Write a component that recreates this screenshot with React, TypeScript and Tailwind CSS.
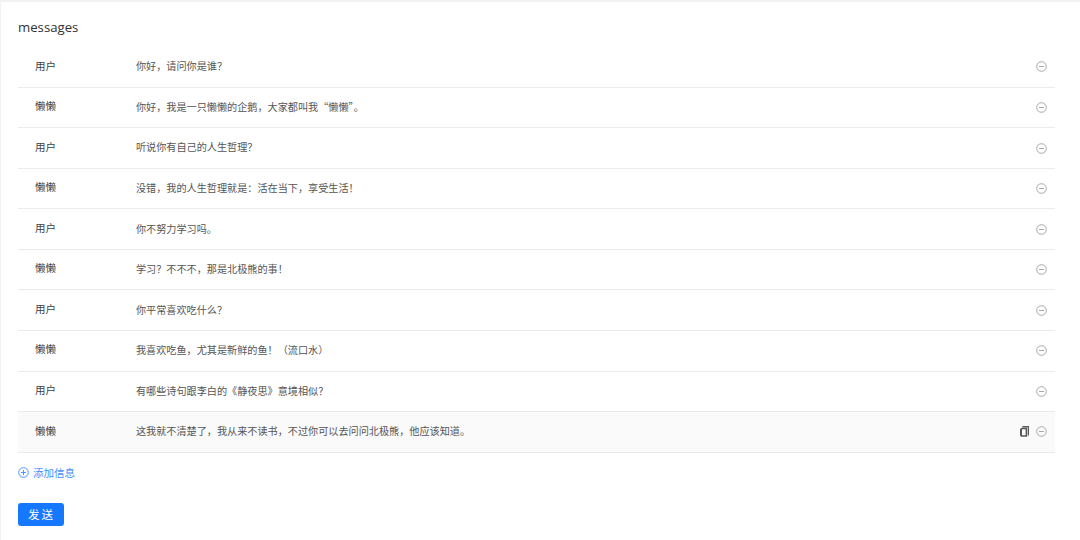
const messages = [
  { role: '用户', text: '你好\uFF0C请问你是谁\uFF1F' },
  { role: '懒懒', text: '你好\uFF0C我是一只懒懒的企鹅\uFF0C大家都叫我\u201C懒懒\u201D。' },
  { role: '用户', text: '听说你有自己的人生哲理\uFF1F' },
  { role: '懒懒', text: '没错\uFF0C我的人生哲理就是\uFF1A活在当下\uFF0C享受生活\uFF01' },
  { role: '用户', text: '你不努力学习吗。' },
  { role: '懒懒', text: '学习\uFF1F不不不\uFF0C那是北极熊的事\uFF01' },
  { role: '用户', text: '你平常喜欢吃什么\uFF1F' },
  { role: '懒懒', text: '我喜欢吃鱼\uFF0C尤其是新鲜的鱼\uFF01\uFF08流口水\uFF09' },
  { role: '用户', text: '有哪些诗句跟李白的《静夜思》意境相似\uFF1F' },
  { role: '懒懒', text: '这我就不清楚了\uFF0C我从来不读书\uFF0C不过你可以去问问北极熊\uFF0C他应该知道。' },
];

function MinusCircle() {
  return (
    <svg width="11" height="11" viewBox="0 0 11 11" fill="none" stroke="#a8a8a8" strokeWidth="1">
      <circle cx="5.5" cy="5.5" r="4.8" />
      <path d="M3 5.5h5" />
    </svg>
  );
}

function CopyIcon() {
  return (
    <svg width="9" height="11" viewBox="0 0 9 11" fill="#595959">
      <path d="M2.4 0H9v9.4H7.8V1.2H2.4z" />
      <path d="M0 3 2.2 1.6h5V10.8H1.2L0 9.6zM2 3.6v5.2l.4.4h3.2V3.2H2.6z" />
    </svg>
  );
}

function MessageRow({ role, text, active }: { role: string; text: string; active: boolean }) {
  return (
    <div className={`flex h-[40.55px] shrink-0 items-center border-b border-[#ebebeb] text-[10.15px] text-[#555555] ${active ? 'bg-[#fafafa]' : ''}`}>
      <div className="w-[118px] pb-[3px] pl-[17px] text-[10.5px] text-[#404040]">{role}</div>
      <div className="flex-1 pb-[2px]">{text}</div>
      <div className="flex items-center gap-[7px] pr-[8px]">
        {active && <CopyIcon />}
        <MinusCircle />
      </div>
    </div>
  );
}

export default function App() {
  return (
    <div className="h-[540px] w-[1080px] overflow-hidden bg-white font-['Noto_Sans_CJK_SC',sans-serif]">
      <div className="h-[2px] bg-[#f2f2f2]" />
      <div className="flex h-[538px] flex-col border-l border-[#f2f2f2] pl-[17px]">
        <div className="flex h-[45.2px] items-center pt-[6px] font-['Open_Sans',sans-serif] text-[13.2px] text-[#333333]">messages</div>
        <div className="flex w-[1037px] flex-col">
          {messages.map((m, i) => (
            <MessageRow key={i} role={m.role} text={m.text} active={i === messages.length - 1} />
          ))}
        </div>
        <div className="mt-[12px] flex items-center gap-[4px] text-[10.5px] text-[#3f8fff]">
          <svg width="11" height="11" viewBox="0 0 11 11" fill="none" stroke="#4b94ff" strokeWidth="1">
            <circle cx="5.5" cy="5.5" r="4.8" />
            <path d="M3 5.5h5M5.5 3v5" />
          </svg>
          <span>添加信息</span>
        </div>
        <button className="mt-[23px] h-[23px] w-[46px] rounded-[3px] bg-[#1677ff] pl-[1px] text-[11.5px] tracking-[2px] text-white">
          发送
        </button>
      </div>
    </div>
  );
}
